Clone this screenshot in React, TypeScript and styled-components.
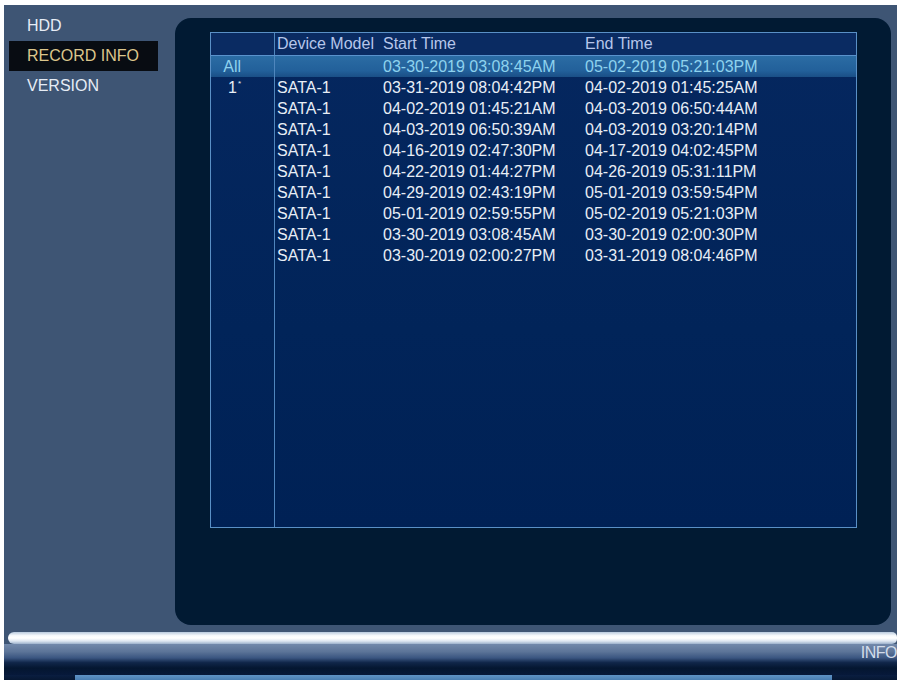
import React from "react";
import styled, { createGlobalStyle } from "styled-components";

const Global = createGlobalStyle`
  html, body { margin: 0; padding: 0; background: #ffffff; }
  body { font-family: "Liberation Sans", Arial, sans-serif; }
`;

const Screen = styled.div`
  margin: 5px 7px 0 4px;
  height: 675px;
  background: #3e5574;
  display: flex;
  flex-direction: column;
  overflow: hidden;
`;

const Main = styled.div`
  flex: 1;
  display: flex;
  min-height: 0;
  padding-right: 6px;
`;

const Sidebar = styled.nav`
  width: 171px;
  flex: none;
  padding-top: 6px;
  display: flex;
  flex-direction: column;
`;

const MenuItem = styled.div<{ $active?: boolean }>`
  height: 30px;
  line-height: 30px;
  margin-left: 5px;
  width: 149px;
  padding-left: 18px;
  box-sizing: border-box;
  font-size: 16px;
  color: ${(p) => (p.$active ? "#dcc68c" : "#e6ecf5")};
  background: ${(p) => (p.$active ? "#080c12" : "transparent")};
`;

const Panel = styled.section`
  flex: 1;
  margin: 13px 0 5px 0;
  border-radius: 16px;
  background: #011a33;
  padding: 14px 34px 97px 35px;
  display: flex;
  flex-direction: column;
`;

const TableBox = styled.div`
  flex: 1;
  display: flex;
  flex-direction: column;
  border: 1px solid #5a90c6;
  background: linear-gradient(180deg, #05275f 0%, #012459 60%, #002155 100%);
  font-size: 16px;
`;

const cols = "64px 106px 202px 1fr";

const HeaderRow = styled.div`
  display: grid;
  grid-template-columns: ${cols};
  height: 22px;
  line-height: 22px;
  color: #b6c6ea;
  border-bottom: 1px solid #5a92cc;
  background: #0a2b62;
`;

const Row = styled.div<{ $selected?: boolean; $fill?: boolean }>`
  display: grid;
  grid-template-columns: ${cols};
  height: ${(p) => (p.$fill ? "auto" : "21px")};
  flex: ${(p) => (p.$fill ? "1" : "none")};
  line-height: 21px;
  color: ${(p) => (p.$selected ? "#8ed2ee" : "#e8eef6")};
  background: ${(p) =>
    p.$selected ? "linear-gradient(180deg, #2b6ca4 0%, #22609a 70%, #1a4f86 100%)" : "transparent"};
`;

const IndexCell = styled.div`
  border-right: 1px solid #4f86bd;
  text-align: right;
  padding-right: 33px;
  white-space: nowrap;
`;

const Cell = styled.div`
  padding-left: 2px;
  white-space: nowrap;
  overflow: hidden;
`;

const Mark = styled.sup`
  font-size: 8px;
  vertical-align: top;
  line-height: 14px;
  margin-left: 1px;
`;

const BottomBar = styled.footer`
  height: 50px;
  flex: none;
  padding-top: 2px;
  box-sizing: border-box;
  display: flex;
  flex-direction: column;
`;

const Gloss = styled.div`
  height: 12px;
  margin-left: 4px;
  border-radius: 6px 5px 5px 6px;
  background: linear-gradient(180deg, #b8cade 0%, #f6f9fc 30%, #ffffff 50%, #dfe8f2 75%, #9cb1cc 100%);
`;

const Band = styled.div`
  height: 31px;
  display: flex;
  justify-content: flex-end;
  align-items: flex-start;
  padding-top: 1px;
  box-sizing: border-box;
  background: linear-gradient(180deg, #7289ab 0%, #5c7498 25%, #3a5580 45%, #102649 60%, #041630 78%, #07193a 100%);
`;

const InfoLabel = styled.span`
  font-size: 16px;
  line-height: 16px;
  color: #d2dcea;
  letter-spacing: -0.5px;
`;

const StatusLine = styled.div`
  height: 5px;
  display: flex;
`;

const Segment = styled.div<{ $w?: number; $lit?: boolean }>`
  flex: ${(p) => (p.$w ? `0 0 ${p.$w}px` : "1")};
  background: ${(p) =>
    p.$lit ? "linear-gradient(180deg, #5f93c6, #4a7fb4)" : "linear-gradient(180deg, #0a1e40, #061733)"};
`;

type Rec = { idx?: React.ReactNode; model: string; start: string; end: string; selected?: boolean };

const records: Rec[] = [
  { idx: "All", model: "", start: "03-30-2019 03:08:45AM", end: "05-02-2019 05:21:03PM", selected: true },
  { idx: <>1<Mark>*</Mark></>, model: "SATA-1", start: "03-31-2019 08:04:42PM", end: "04-02-2019 01:45:25AM" },
  { model: "SATA-1", start: "04-02-2019 01:45:21AM", end: "04-03-2019 06:50:44AM" },
  { model: "SATA-1", start: "04-03-2019 06:50:39AM", end: "04-03-2019 03:20:14PM" },
  { model: "SATA-1", start: "04-16-2019 02:47:30PM", end: "04-17-2019 04:02:45PM" },
  { model: "SATA-1", start: "04-22-2019 01:44:27PM", end: "04-26-2019 05:31:11PM" },
  { model: "SATA-1", start: "04-29-2019 02:43:19PM", end: "05-01-2019 03:59:54PM" },
  { model: "SATA-1", start: "05-01-2019 02:59:55PM", end: "05-02-2019 05:21:03PM" },
  { model: "SATA-1", start: "03-30-2019 03:08:45AM", end: "03-30-2019 02:00:30PM" },
  { model: "SATA-1", start: "03-30-2019 02:00:27PM", end: "03-31-2019 08:04:46PM" },
];

export default function App() {
  return (
    <>
      <Global />
      <Screen>
        <Main>
          <Sidebar>
            <MenuItem>HDD</MenuItem>
            <MenuItem $active>RECORD INFO</MenuItem>
            <MenuItem>VERSION</MenuItem>
          </Sidebar>
          <Panel>
            <TableBox>
              <HeaderRow>
                <IndexCell />
                <Cell>Device Model</Cell>
                <Cell>Start Time</Cell>
                <Cell>End Time</Cell>
              </HeaderRow>
              {records.map((r, i) => (
                <Row key={i} $selected={r.selected}>
                  <IndexCell>{r.idx}</IndexCell>
                  <Cell>{r.model}</Cell>
                  <Cell>{r.start}</Cell>
                  <Cell>{r.end}</Cell>
                </Row>
              ))}
              <Row $fill>
                <IndexCell />
                <Cell />
                <Cell />
                <Cell />
              </Row>
            </TableBox>
          </Panel>
        </Main>
        <BottomBar>
          <Gloss />
          <Band>
            <InfoLabel>INFO</InfoLabel>
          </Band>
          <StatusLine>
            <Segment $w={71} />
            <Segment $lit />
            <Segment $w={65} />
          </StatusLine>
        </BottomBar>
      </Screen>
    </>
  );
}
